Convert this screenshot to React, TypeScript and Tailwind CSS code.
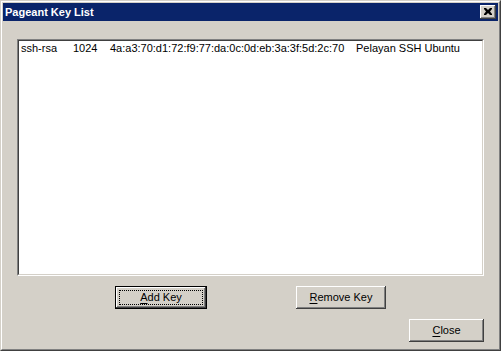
import React from "react";

const bevel =
  "shadow-[inset_-1px_-1px_#404040,inset_1px_1px_#ffffff,inset_-2px_-2px_#808080,inset_2px_2px_#d4d0c8]";

interface BtnProps {
  mnemonic: string;
  rest: string;
  width: string;
  isDefault?: boolean;
}

const WinButton: React.FC<BtnProps> = ({ mnemonic, rest, width, isDefault }) => {
  if (isDefault) {
    return (
      <div className={`relative h-[23px] ${width} border border-black bg-[#d4d0c8]`}>
        <div className={`h-full w-full flex items-center justify-center ${bevel}`}>
          <span>
            <span className="underline underline-offset-2">{mnemonic}</span>
            {rest}
          </span>
        </div>
        {/* focus rectangle */}
        <div className="absolute inset-[3px] border border-dotted border-black" />
      </div>
    );
  }
  return (
    <div className={`h-[23px] ${width} bg-[#d4d0c8] flex items-center justify-center ${bevel}`}>
      <span>
        <span className="underline underline-offset-2">{mnemonic}</span>
        {rest}
      </span>
    </div>
  );
};

const App: React.FC = () => {
  return (
    <div className="w-[501px] h-[351px] border border-t-[#d4d0c8] border-l-[#d4d0c8] border-r-[#404040] border-b-[#404040] bg-[#d4d0c8] font-['Liberation_Sans',Arial,sans-serif] text-[11px] text-black leading-[13px]">
      <div className="h-full border border-t-white border-l-white border-r-[#808080] border-b-[#808080] p-px flex flex-col">
        {/* title bar */}
        <div className="h-[18px] bg-[#0a246a] flex items-center justify-between pl-[2px] pr-[2px]">
          <span className="text-white font-bold">Pageant Key List</span>
          <div className={`w-[16px] h-[14px] bg-[#d4d0c8] flex items-center justify-center ${bevel}`}>
            <svg width="8" height="7" viewBox="0 0 8 7" className="-mt-px">
              <path d="M0 0h2l2 2 2-2h2v1L6 3.5 8 6v1H6L4 5 2 7H0V6l2-2.5L0 1z" fill="#000" />
            </svg>
          </div>
        </div>

        {/* body */}
        <div className="flex-1 flex flex-col px-[14px] pt-[18px]">
          <div className="h-[237px] border border-t-[#808080] border-l-[#808080] border-r-white border-b-white">
            <div className="h-full bg-white border border-t-[#404040] border-l-[#404040] border-r-[#d4d0c8] border-b-[#d4d0c8] pl-[2px]">
              <div className="flex whitespace-nowrap pt-px">
                <span className="w-[52px]">ssh-rsa</span>
                <span className="w-[37px]">1024</span>
                <span className="w-[246px]">4a:a3:70:d1:72:f9:77:da:0c:0d:eb:3a:3f:5d:2c:70</span>
                <span>Pelayan SSH Ubuntu</span>
              </div>
            </div>
          </div>

          <div className="flex mt-[10px] pl-[98px]">
            <WinButton mnemonic="A" rest="dd Key" width="w-[92px]" isDefault />
            <div className="ml-[89px]">
              <WinButton mnemonic="R" rest="emove Key" width="w-[90px]" />
            </div>
          </div>

          <div className="flex justify-end mt-[10px]">
            <WinButton mnemonic="C" rest="lose" width="w-[75px]" />
          </div>
        </div>
      </div>
    </div>
  );
};

export default App;
